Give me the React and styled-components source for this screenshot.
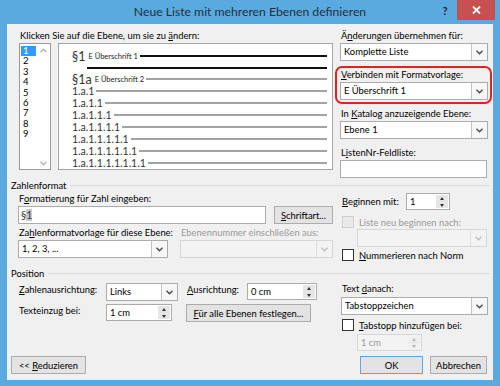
import React from 'react';
import styled, { createGlobalStyle } from 'styled-components';

const FONT = `Lato, "Open Sans", "Noto Sans", sans-serif`;

const GlobalStyle = createGlobalStyle`
  html, body { margin: 0; padding: 0; }
  body { width: 500px; height: 386px; overflow: hidden; font-family: ${FONT}; }
`;

const Window = styled.div`
  width: 500px;
  height: 386px;
  box-sizing: border-box;
  background: #5aaadf;
  display: flex;
  flex-direction: column;
`;

const TitleBar = styled.div`
  height: 24px;
  flex: none;
  display: grid;
  grid-template-columns: 1fr auto 1fr;
  align-items: start;
`;

const Title = styled.div`
  grid-column: 2;
  font-size: 12.2px;
  line-height: 24px;
  color: #23303b;
  white-space: nowrap;
`;

const Controls = styled.div`
  justify-self: end;
  display: flex;
`;

const HelpButton = styled.div`
  width: 24px;
  height: 20px;
  display: flex;
  align-items: center;
  justify-content: center;
  font-size: 11px;
  font-weight: 700;
  color: #222;
`;

const CloseButton = styled.div`
  width: 38px;
  height: 20px;
  margin-right: 5px;
  background: #c75050;
  display: flex;
  align-items: center;
  justify-content: center;
`;

const Body = styled.div`
  flex: 1;
  margin: 0 7px 6px;
  background: #f0f0f0;
  padding: 5px 4px 0 4px;
  display: flex;
  flex-direction: column;
  font-size: 9.4px;
  color: #000;
`;

const Label = styled.div`
  line-height: 14px;
  height: 14px;
  padding-left: 1px;
  white-space: nowrap;
  color: ${p => (p.$disabled ? '#9a9a9a' : '#000')};
  ${p => p.$w && `width: ${p.$w}px; flex: none; box-sizing: border-box;`}
  ${p => p.$ml && `margin-left: ${p.$ml}px;`}
  ${p => p.$mt && `margin-top: ${p.$mt}px;`}
`;

const Key = styled.span`
  text-decoration: underline;
`;

/* top part */
const Top = styled.div`
  display: flex;
  gap: 7px;
  padding-left: 8px;
`;

const LeftCol = styled.div`
  width: 314px;
  display: flex;
  flex-direction: column;
`;

const RightCol = styled.div`
  width: 148px;
  display: flex;
  flex-direction: column;
`;

const ListRow = styled.div`
  display: flex;
  gap: 7px;
`;

const ListBox = styled.div`
  box-sizing: border-box;
  width: 32px;
  height: 127px;
  border: 1px solid #9a9a9a;
  background: #fff;
  display: flex;
`;

const ListItems = styled.div`
  width: 16px;
  padding-top: 2px;
  display: flex;
  flex-direction: column;
`;

const ListItem = styled.div`
  height: 10.4px;
  line-height: 10.4px;
  padding-left: 2px;
  margin-left: 1px;
  width: 13px;
  font-size: 9.5px;
  background: ${p => (p.$selected ? '#3399ff' : 'transparent')};
  color: ${p => (p.$selected ? '#fff' : '#000')};
`;

const ScrollBar = styled.div`
  flex: 1;
  display: flex;
  flex-direction: column;
  justify-content: space-between;
  align-items: center;
  padding: 4px 0 3px;
`;

const Preview = styled.div`
  flex: 1;
  box-sizing: border-box;
  height: 127px;
  border: 1px solid #a5a5a5;
  background: #fff;
  padding: 6px 5px 0 13px;
  display: flex;
  flex-direction: column;
`;

const PreviewRow = styled.div`
  height: 12px;
  display: flex;
  align-items: center;
  gap: 2px;
  white-space: nowrap;
`;

const Para = styled.span`
  font-size: 12.5px;
  color: #333;
`;

const StyleName = styled.span`
  font-size: 7.5px;
  color: #222;
  margin-left: 1px;
`;

const LevelText = styled.span`
  font-size: 10.5px;
  color: #333;
`;

const Rule = styled.span`
  flex: 1;
  height: 2px;
  background: ${p => (p.$dark ? '#111' : '#a3a3a3')};
  ${p => p.$indent && `margin-left: ${p.$indent}px;`}
`;

const RedBox = styled.div`
  margin: 5px -4px 0 -5px;
  border: 2px solid #e0231f;
  border-radius: 7px;
  padding: 0 2px 2px 3px;
  display: flex;
  flex-direction: column;
`;

/* fields */
const SelectBox = styled.div`
  box-sizing: border-box;
  width: ${p => p.$w}px;
  height: 18px;
  flex: none;
  display: flex;
  border: 1px solid ${p => (p.$disabled ? '#d6d6d6' : '#acacac')};
  background: ${p => (p.$disabled ? '#f3f3f3' : '#fff')};
  ${p => p.$ml && `margin-left: ${p.$ml}px;`}
  ${p => p.$mt && `margin-top: ${p.$mt}px;`}
`;

const FieldText = styled.span`
  flex: 1;
  padding-left: 3px;
  line-height: 16px;
  white-space: nowrap;
  overflow: hidden;
  color: ${p => (p.$disabled ? '#9a9a9a' : '#000')};
`;

const SelectArrow = styled.span`
  width: 16px;
  flex: none;
  box-sizing: border-box;
  border-left: 1px solid ${p => (p.$disabled ? '#dedede' : '#c4c4c4')};
  background: ${p => (p.$disabled ? '#f3f3f3' : '#f7f7f7')};
  display: flex;
  align-items: center;
  justify-content: center;
`;

const SpinBox = styled(SelectBox)`
  height: 17px;
`;

const SpinButtons = styled.span`
  width: 12px;
  flex: none;
  margin: 1px;
  background: ${p => (p.$disabled ? '#f0f0f0' : '#e6e6e6')};
  display: flex;
  flex-direction: column;
`;

const SpinHalf = styled.span`
  flex: 1;
  display: flex;
  align-items: center;
  justify-content: center;
  & + & { border-top: 1px solid ${p => (p.$disabled ? '#e4e4e4' : '#cfcfcf')}; }
`;

const Tri = styled.span`
  width: 0;
  height: 0;
  border-left: 2.5px solid transparent;
  border-right: 2.5px solid transparent;
  ${p => (p.$down ? 'border-top' : 'border-bottom')}: 3px solid ${p => (p.$disabled ? '#b5b5b5' : '#333')};
`;

const TextInput = styled.div`
  box-sizing: border-box;
  width: ${p => p.$w}px;
  height: 18px;
  flex: none;
  border: 1px solid #acacac;
  background: #fff;
  padding-left: 2px;
  line-height: 16px;
  font-size: 10.5px;
  color: #333;
`;

const Sel = styled.span`
  background: #c9c9c9;
`;

const Button = styled.div`
  box-sizing: border-box;
  width: ${p => p.$w}px;
  height: 18px;
  flex: none;
  border: 1px solid ${p => (p.$default ? '#6aa3d8' : '#acacac')};
  background: #e3e3e3;
  display: flex;
  align-items: center;
  justify-content: center;
  white-space: nowrap;
  ${p => p.$ml && `margin-left: ${p.$ml}px;`}
`;

const CheckRow = styled.div`
  height: 14px;
  display: flex;
  align-items: center;
  gap: 5px;
  padding-left: 1px;
  white-space: nowrap;
  color: ${p => (p.$disabled ? '#9a9a9a' : '#000')};
  ${p => p.$mt && `margin-top: ${p.$mt}px;`}
`;

const Box = styled.span`
  box-sizing: border-box;
  width: 12px;
  height: 12px;
  border: 1px solid ${p => (p.$disabled ? '#cfcfcf' : '#333')};
  background: ${p => (p.$disabled ? '#e9e9e9' : '#fff')};
`;

/* sections */
const SectionHeader = styled.div`
  height: 14px;
  display: flex;
  align-items: center;
  gap: 4px;
  white-space: nowrap;
  ${p => p.$mt && `margin-top: ${p.$mt}px;`}
  &::after {
    content: '';
    flex: 1;
    height: 1px;
    background: #dadada;
    margin-right: -1px;
  }
`;

const SectionBody = styled.div`
  display: flex;
  gap: 8px;
  padding-left: 7px;
`;

const SectionLeft = styled.div`
  width: 315px;
  display: flex;
  flex-direction: column;
`;

const SectionRight = styled.div`
  width: 147px;
  display: flex;
  flex-direction: column;
`;

const FieldRow = styled.div`
  display: flex;
  align-items: ${p => (p.$center ? 'center' : 'flex-start')};
  ${p => p.$gap && `gap: ${p.$gap}px;`}
  ${p => p.$mt && `margin-top: ${p.$mt}px;`}
`;

const TwoCols = styled.div`
  display: grid;
  grid-template-columns: 150px 153px;
  column-gap: 12px;
  margin-top: 2px;
`;

const Footer = styled.div`
  display: flex;
  justify-content: space-between;
  margin-top: 5px;
`;

const FooterRight = styled.div`
  display: flex;
  gap: 7px;
  margin-right: 2px;
`;

function Chevron({ up, color = '#444' }) {
  return (
    <svg width="7" height="5" viewBox="0 0 7 5">
      <path
        d={up ? 'M0.5 4.2 L3.5 1.2 L6.5 4.2' : 'M0.5 0.8 L3.5 3.8 L6.5 0.8'}
        fill="none"
        stroke={color}
        strokeWidth="1.3"
      />
    </svg>
  );
}

function Select({ w, value, disabled, ml, mt }) {
  return (
    <SelectBox $w={w} $disabled={disabled} $ml={ml} $mt={mt}>
      <FieldText $disabled={disabled}>{value}</FieldText>
      <SelectArrow $disabled={disabled}>
        <Chevron color={disabled ? '#bdbdbd' : '#444'} />
      </SelectArrow>
    </SelectBox>
  );
}

function Spin({ w, value, disabled, ml, mt }) {
  return (
    <SpinBox $w={w} $disabled={disabled} $ml={ml} $mt={mt}>
      <FieldText $disabled={disabled}>{value}</FieldText>
      <SpinButtons $disabled={disabled}>
        <SpinHalf $disabled={disabled}><Tri $disabled={disabled} /></SpinHalf>
        <SpinHalf $disabled={disabled}><Tri $down $disabled={disabled} /></SpinHalf>
      </SpinButtons>
    </SpinBox>
  );
}

function Check({ children, disabled, mt }) {
  return (
    <CheckRow $disabled={disabled} $mt={mt}>
      <Box $disabled={disabled} />
      <span>{children}</span>
    </CheckRow>
  );
}

const levels = ['1.a.1', '1.a.1.1', '1.a.1.1.1', '1.a.1.1.1.1', '1.a.1.1.1.1.1', '1.a.1.1.1.1.1.1', '1.a.1.1.1.1.1.1.1'];

export default function App() {
  return (
    <>
      <GlobalStyle />
      <Window>
        <TitleBar>
          <Title>Neue Liste mit mehreren Ebenen definieren</Title>
          <Controls>
            <HelpButton>?</HelpButton>
            <CloseButton>
              <svg width="9" height="8" viewBox="0 0 9 8">
                <path d="M1 0.5 L8 7.5 M8 0.5 L1 7.5" stroke="#fff" strokeWidth="1.8" />
              </svg>
            </CloseButton>
          </Controls>
        </TitleBar>

        <Body>
          <Top>
            <LeftCol>
              <Label>Klicken Sie auf die Ebene, um sie zu <Key>ä</Key>ndern:</Label>
              <ListRow>
                <ListBox>
                  <ListItems>
                    {[1, 2, 3, 4, 5, 6, 7, 8, 9].map(n => (
                      <ListItem key={n} $selected={n === 1}>{n}</ListItem>
                    ))}
                  </ListItems>
                  <ScrollBar>
                    <Chevron up color="#b0b0b0" />
                    <Chevron color="#b0b0b0" />
                  </ScrollBar>
                </ListBox>
                <Preview>
                  <PreviewRow>
                    <Para>§1</Para>
                    <StyleName>E Überschrift 1</StyleName>
                    <Rule $dark />
                  </PreviewRow>
                  <PreviewRow>
                    <Rule $dark $indent={15} />
                  </PreviewRow>
                  <PreviewRow>
                    <Para>§1a</Para>
                    <StyleName>E Überschrift 2</StyleName>
                    <Rule />
                  </PreviewRow>
                  {levels.map(t => (
                    <PreviewRow key={t}>
                      <LevelText>{t}</LevelText>
                      <Rule />
                    </PreviewRow>
                  ))}
                </Preview>
              </ListRow>
            </LeftCol>

            <RightCol>
              <Label>Ä<Key>n</Key>derungen übernehmen für:</Label>
              <Select w={148} value="Komplette Liste" />
              <RedBox>
                <Label><Key>V</Key>erbinden mit Formatvorlage:</Label>
                <Select w={148} value="E Überschrift 1" />
              </RedBox>
              <Label $mt={3}>In <Key>K</Key>atalog anzuzeigende Ebene:</Label>
              <Select w={148} value="Ebene 1" />
              <Label $mt={7}>L<Key>i</Key>stenNr-Feldliste:</Label>
              <TextInput $w={147} />
            </RightCol>
          </Top>

          <SectionHeader>Zahlenformat</SectionHeader>
          <SectionBody>
            <SectionLeft>
              <Label>F<Key>o</Key>rmatierung für Zahl eingeben:</Label>
              <FieldRow $gap={8}>
                <TextInput $w={248}>§<Sel>1</Sel></TextInput>
                <Button $w={59}><span><Key>S</Key>chriftart...</span></Button>
              </FieldRow>
              <TwoCols>
                <Label>Za<Key>h</Key>lenformatvorlage für diese Ebene:</Label>
                <Label $disabled>Ebenennummer einschließen aus:</Label>
                <Select w={150} value="1, 2, 3, ..." />
                <Select w={153} value="" disabled />
              </TwoCols>
            </SectionLeft>
            <SectionRight>
              <FieldRow $center $mt={1}>
                <Label $w={65}><Key>B</Key>eginnen mit:</Label>
                <Spin w={44} value="1" />
              </FieldRow>
              <Check disabled mt={5}>Liste neu beginnen nach:</Check>
              <Select w={130} value="" disabled ml={16} />
              <Check mt={1}><Key>N</Key>ummerieren nach Norm</Check>
            </SectionRight>
          </SectionBody>

          <SectionHeader $mt={4}>Position</SectionHeader>
          <SectionBody>
            <SectionLeft>
              <FieldRow $mt={3}>
                <Label $w={88}><Key>Z</Key>ahlenausrichtung:</Label>
                <Select w={72} value="Links" />
                <Label $w={61} $ml={8}><Key>A</Key>usrichtung:</Label>
                <Spin w={70} value="0 cm" />
              </FieldRow>
              <FieldRow $mt={3}>
                <Label $w={88}>Texteinzu<Key>g</Key> bei:</Label>
                <Spin w={66} value="1 cm" />
                <Button $w={125} $ml={14}><span><Key>F</Key>ür alle Ebenen festlegen...</span></Button>
              </FieldRow>
            </SectionLeft>
            <SectionRight>
              <Label $mt={2}>Text <Key>d</Key>anach:</Label>
              <Select w={147} value="Tabstoppzeichen" mt={1} />
              <Check mt={3}><Key>T</Key>abstopp hinzufügen bei:</Check>
              <Spin w={65} value="1 cm" disabled ml={16} mt={2} />
            </SectionRight>
          </SectionBody>

          <Footer>
            <Button $w={75}><span>&lt;&lt; <Key>R</Key>eduzieren</span></Button>
            <FooterRight>
              <Button $w={63} $default>OK</Button>
              <Button $w={57}>Abbrechen</Button>
            </FooterRight>
          </Footer>
        </Body>
      </Window>
    </>
  );
}
